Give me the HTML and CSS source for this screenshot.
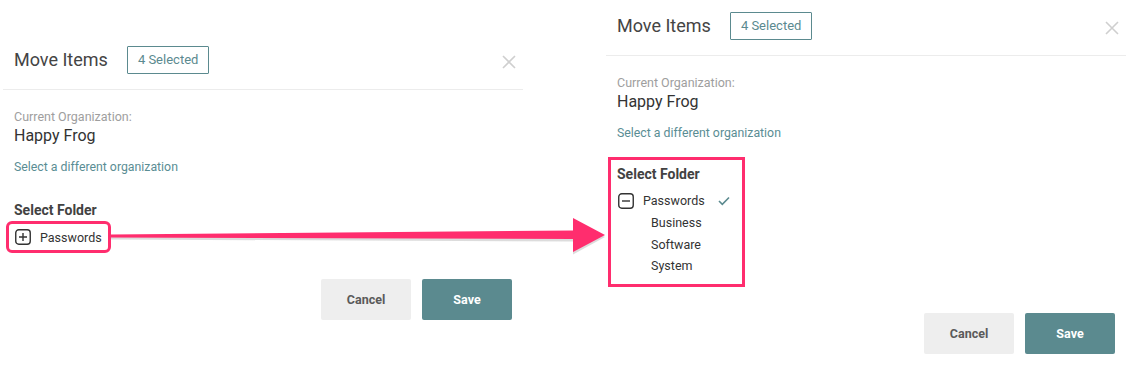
FILE: index.html
```html
<!DOCTYPE html>
<html>
<head>
<meta charset="utf-8">
<link rel="stylesheet" href="styles.css">
</head>
<body>
<div class="page">
  <section class="panel panel-before">
    <header class="head">
      <h2 class="title">Move Items</h2>
      <span class="badge">4 Selected</span>
      <span class="close" aria-label="close"><svg width="14" height="14" viewBox="0 0 14 14"><path d="M1 1 L13 13 M13 1 L1 13" stroke="#cfcfcf" stroke-width="1.6" fill="none"/></svg></span>
    </header>
    <div class="body">
      <div class="label">Current Organization:</div>
      <div class="org">Happy Frog</div>
      <a class="link">Select a different organization</a>
      <div class="folder">
        <h3 class="folder-title">Select Folder</h3>
        <div class="row root hl-row">
          <span class="toggle"><svg width="16" height="16" viewBox="0 0 16 16"><rect x="0.75" y="0.75" width="14.5" height="14.5" rx="3" fill="none" stroke="#333" stroke-width="1.4"/><path d="M4 8 H12 M8 4 V12" stroke="#333" stroke-width="1.4"/></svg></span>
          <span>Passwords</span>
        </div>
      </div>
    </div>
    <footer class="foot">
      <button class="btn btn-cancel">Cancel</button>
      <button class="btn btn-save">Save</button>
    </footer>
  </section>

  <section class="panel panel-after">
    <header class="head">
      <h2 class="title">Move Items</h2>
      <span class="badge">4 Selected</span>
      <span class="close" aria-label="close"><svg width="14" height="14" viewBox="0 0 14 14"><path d="M1 1 L13 13 M13 1 L1 13" stroke="#cfcfcf" stroke-width="1.6" fill="none"/></svg></span>
    </header>
    <div class="body">
      <div class="label">Current Organization:</div>
      <div class="org">Happy Frog</div>
      <a class="link">Select a different organization</a>
      <div class="folder hl-box">
        <h3 class="folder-title">Select Folder</h3>
        <div class="row root">
          <span class="toggle"><svg width="16" height="16" viewBox="0 0 16 16"><rect x="0.75" y="0.75" width="14.5" height="14.5" rx="3" fill="none" stroke="#333" stroke-width="1.4"/><path d="M4 8 H12" stroke="#333" stroke-width="1.4"/></svg></span>
          <span>Passwords</span>
          <svg class="check" width="12" height="10" viewBox="0 0 12 10"><path d="M1 5 L4.3 8.3 L11 1.5" stroke="#5b8a8f" stroke-width="1.6" fill="none"/></svg>
        </div>
        <div class="row child">Business</div>
        <div class="row child">Software</div>
        <div class="row child">System</div>
      </div>
    </div>
    <footer class="foot">
      <button class="btn btn-cancel">Cancel</button>
      <button class="btn btn-save">Save</button>
    </footer>
  </section>

  <svg class="arrow" width="1127" height="369" viewBox="0 0 1127 369">
    <polygon points="111,235 573,231 573,218 605,235.5 573,253 573,240 111,238" fill="#9a9a9a" opacity="0.35" transform="translate(0,1.5)"/>
    <polygon points="111,234.5 573,230.5 573,218 605,235 573,252 573,239 111,237.5" fill="#ff2d6e"/>
  </svg>
</div>
</body>
</html>
```

FILE: styles.css
```css
* { box-sizing: border-box; }
html, body { margin: 0; padding: 0; background: #fff; }
body {
  font-family: Roboto, "Liberation Sans", sans-serif;
  color: #333;
  width: 1127px;
  height: 369px;
  overflow: hidden;
}
.page {
  position: relative;
  display: flex;
  align-items: flex-start;
  gap: 83px;
  padding-left: 3px;
  height: 369px;
}
.panel {
  width: 520px;
  display: flex;
  flex-direction: column;
}
.panel-before { margin-top: 34px; }
.panel-after { margin-top: 0; }

.head {
  display: flex;
  align-items: center;
  padding: 12px 7px 15px 11px;
  border-bottom: 1px solid #ececec;
}
.title {
  margin: 0;
  font-size: 18px;
  font-weight: 400;
  color: #444;
  line-height: 28px;
}
.badge {
  margin-left: 19px;
  height: 28px;
  padding: 0 10px;
  border: 1px solid #5b8a8f;
  border-radius: 1px;
  color: #5b8a8f;
  font-size: 13px;
  line-height: 26px;
}
.close {
  margin-left: auto;
  margin-top: 3px;
  display: flex;
  width: 14px;
  height: 14px;
}
.body {
  padding: 20px 11px 0 11px;
  display: flex;
  flex-direction: column;
  align-items: flex-start;
}
.label {
  font-size: 12.5px;
  line-height: 14px;
  color: #9e9e9e;
}
.org {
  margin-top: 2px;
  font-size: 16px;
  line-height: 20px;
  color: #333;
}
.link {
  margin-top: 13px;
  font-size: 12.3px;
  line-height: 16px;
  color: #5a8d94;
}
.folder {
  margin-top: 26px;
  display: flex;
  flex-direction: column;
  align-items: flex-start;
}
.folder-title {
  margin: 0 0 7px 0;
  font-size: 14px;
  font-weight: 700;
  line-height: 18px;
  color: #424242;
}
.row {
  display: flex;
  align-items: center;
  height: 22px;
  font-size: 12.5px;
  color: #333;
}
.hl-box .row { height: 21.67px; }
.toggle {
  display: flex;
  width: 16px;
  height: 16px;
  margin-left: 1px;
  margin-right: 9px;
}
.child { padding-left: 34px; }
.check { margin-left: 13px; }

/* annotation highlights */
.hl-row {
  margin-left: -3px;
  padding: 0 4px 0 3px;
  outline: 3px solid #ff2d6e;
  outline-offset: 2px;
  border-radius: 1px;
}
.hl-box {
  margin-top: 19px;
  margin-left: -6px;
  padding: 5px 12px 7px 6px;
  outline: 3px solid #ff2d6e;
  outline-offset: 0;
}

.foot {
  display: flex;
  justify-content: flex-end;
  gap: 11px;
  padding-right: 11px;
  margin-top: 31px;
}
.panel-after .foot { margin-top: 29px; }
.btn {
  width: 90px;
  height: 41px;
  border: none;
  border-radius: 2px;
  font-family: Roboto, "Liberation Sans", sans-serif;
  font-size: 12.5px;
  font-weight: 700;
}
.btn-cancel { background: #eeeeee; color: #5a5a5a; }
.btn-save { background: #5b8a8f; color: #fff; }

.arrow {
  position: absolute;
  left: 0;
  top: 0;
  pointer-events: none;
}
```
